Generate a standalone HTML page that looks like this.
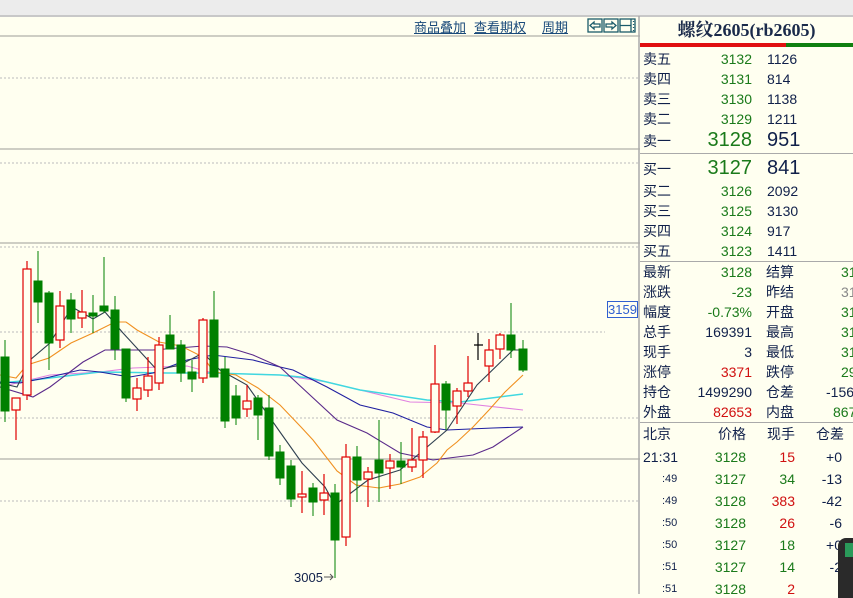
<!DOCTYPE html>
<html><head><meta charset="utf-8"><style>
body{margin:0;width:853px;height:594px;overflow:hidden;background:#fffff0;font-family:"Liberation Sans","Noto Sans CJK SC",sans-serif;position:relative}
.a{position:absolute;white-space:nowrap;font-size:14px;line-height:16px;color:#10204a}
.g{color:#1a7a1a}.r{color:#d01010}
.rt{text-align:right}
.lk{position:absolute;top:19px;font-size:13px;color:#1a4a7a;text-decoration:underline;font-family:"Noto Sans CJK SC",sans-serif;line-height:15px}
</style></head><body>
<div style="position:absolute;left:0;top:0;width:853px;height:15px;background:#ececec;border-bottom:2px solid #c8c8c8"></div>
<span class="lk" style="left:414px">商品叠加</span>
<span class="lk" style="left:474px">查看期权</span>
<span class="lk" style="left:542px">周期</span>
<svg style="position:absolute;left:586px;top:18px" width="52" height="16">
<g fill="none" stroke="#1a5a6a" stroke-width="1.3">
<rect x="2" y="1" width="14" height="13"/><rect x="18" y="1" width="14" height="13"/><rect x="34" y="1" width="15" height="13"/>
<path d="M4 7.5 L8 4 V6 H14 V9 H8 V11 Z"/><path d="M30 7.5 L26 4 V6 H20 V9 H26 V11 Z"/>
<path d="M34 7.5 H45 M45 1 V14"/><path d="M47.5 3V4M47.5 6V7M47.5 9V10M47.5 12V13"/></g></svg>
<svg style="position:absolute;left:0;top:0" width="640" height="594">
<g stroke="#bdbdb5" stroke-width="1.5"><line x1="0" y1="36" x2="640" y2="36"/><line x1="0" y1="149" x2="640" y2="149"/><line x1="0" y1="243" x2="640" y2="243"/><line x1="0" y1="459" x2="640" y2="459"/></g>
<g stroke="#bbb" stroke-width="1" stroke-dasharray="2,2"><line x1="0" y1="78" x2="640" y2="78"/><line x1="0" y1="163" x2="640" y2="163"/><line x1="0" y1="247" x2="640" y2="247"/><line x1="0" y1="332" x2="605" y2="332"/><line x1="0" y1="418" x2="640" y2="418"/><line x1="0" y1="501" x2="640" y2="501"/></g>
<line x1="639" y1="16" x2="639" y2="594" stroke="#aaa" stroke-width="1.5"/>
<g fill="none" stroke-width="1.1">
<polyline stroke="#e080e0" points="0,387 50,375 100,372 133,368 187,366 213,373 280,375 327,382 360,390 410,402 460,403 523,410"/>
<polyline stroke="#40d8e0" stroke-width="1.5" points="0,383 33,380 100,372 167,373 213,373 280,375 310,378 360,390 427,400 460,402 523,394"/>
<polyline stroke="#2020a0" points="0,382 20,383 50,377 80,370 100,372 130,377 153,373 187,360 213,355 253,360 280,367 293,370 327,387 360,405 393,413 427,427 447,430 493,428 523,427"/>
<polyline stroke="#5a2a8a" points="0,387 33,397 50,387 83,362 105,350 153,350 203,346 227,347 253,355 280,367 297,383 337,420 367,433 400,453 433,460 473,455 493,447 523,427"/>
<polyline stroke="#f09020" points="0,375 16,378 27,365 49,358 71,343 93,333 115,322 126,322 137,330 159,342 181,346 203,357 214,372 236,375 258,388 280,405 301,427 313,440 337,471 356,485 379,488 400,484 420,477 437,463 447,450 457,442 473,427 489,410 505,392 523,375"/>
<polyline stroke="#2f4050" points="0,383 17,387 30,360 50,343 72,307 93,319 105,312 123,333 157,370 180,365 203,353 220,370 247,385 280,432 302,463 325,487 335,505 368,480 400,470 447,430 477,385 513,350 523,350"/>
</g>
<g id="c">
<!-- green -->
<g stroke="#008000" fill="#008000">
<line x1="5" y1="340" x2="5" y2="422"/><rect x="1" y="357" width="8" height="54"/>
<line x1="38" y1="251" x2="38" y2="323"/><rect x="34" y="281" width="8" height="21"/>
<line x1="49" y1="291" x2="49" y2="370"/><rect x="45" y="293" width="8" height="50"/>
<line x1="71" y1="293" x2="71" y2="333"/><rect x="67" y="300" width="8" height="19"/>
<line x1="93" y1="295" x2="93" y2="333"/><rect x="89" y="313" width="8" height="3"/>
<line x1="104" y1="257" x2="104" y2="313"/><rect x="100" y="306" width="8" height="5"/>
<line x1="115" y1="296" x2="115" y2="360"/><rect x="111" y="310" width="8" height="39"/>
<line x1="126" y1="349" x2="126" y2="402"/><rect x="122" y="349" width="8" height="49"/>
<line x1="170" y1="315" x2="170" y2="349"/><rect x="166" y="335" width="8" height="14"/>
<line x1="181" y1="340" x2="181" y2="382"/><rect x="177" y="345" width="8" height="28"/>
<line x1="192" y1="360" x2="192" y2="392"/><rect x="188" y="372" width="8" height="7"/>
<line x1="214" y1="291" x2="214" y2="377"/><rect x="210" y="320" width="8" height="57"/>
<line x1="225" y1="357" x2="225" y2="428"/><rect x="221" y="369" width="8" height="52"/>
<line x1="236" y1="385" x2="236" y2="425"/><rect x="232" y="396" width="8" height="22"/>
<line x1="258" y1="395" x2="258" y2="440"/><rect x="254" y="398" width="8" height="17"/>
<line x1="269" y1="395" x2="269" y2="460"/><rect x="265" y="408" width="8" height="48"/>
<line x1="280" y1="445" x2="280" y2="485"/><rect x="276" y="452" width="8" height="26"/>
<line x1="291" y1="460" x2="291" y2="507"/><rect x="287" y="466" width="8" height="33"/>
<line x1="313" y1="483" x2="313" y2="516"/><rect x="309" y="488" width="8" height="14"/>
<line x1="335" y1="484" x2="335" y2="578"/><rect x="331" y="493" width="8" height="47"/>
<line x1="357" y1="446" x2="357" y2="502"/><rect x="353" y="457" width="8" height="23"/>
<line x1="379" y1="420" x2="379" y2="502"/><rect x="375" y="460" width="8" height="13"/>
<line x1="401" y1="442" x2="401" y2="484"/><rect x="397" y="461" width="8" height="6"/>
<line x1="446" y1="381" x2="446" y2="430"/><rect x="442" y="384" width="8" height="26"/>
<line x1="511" y1="303" x2="511" y2="358"/><rect x="507" y="335" width="8" height="15"/>
<line x1="523" y1="340" x2="523" y2="372"/><rect x="519" y="349" width="8" height="21"/>
</g>
<g stroke="#e00000" fill="#fffff0" stroke-width="1.2">
<line x1="16" y1="398" x2="16" y2="440"/><rect x="12" y="398" width="8" height="12"/>
<line x1="27" y1="261" x2="27" y2="400"/><rect x="23" y="269" width="8" height="126"/>
<line x1="60" y1="291" x2="60" y2="348"/><rect x="56" y="306" width="8" height="34"/>
<line x1="82" y1="290" x2="82" y2="328"/><rect x="78" y="312" width="8" height="6"/>
<line x1="137" y1="378" x2="137" y2="411"/><rect x="133" y="388" width="8" height="11"/>
<line x1="148" y1="357" x2="148" y2="397"/><rect x="144" y="376" width="8" height="14"/>
<line x1="159" y1="337" x2="159" y2="390"/><rect x="155" y="345" width="8" height="38"/>
<line x1="203" y1="318" x2="203" y2="383"/><rect x="199" y="320" width="8" height="58"/>
<line x1="247" y1="385" x2="247" y2="417"/><rect x="243" y="401" width="8" height="8"/>
<line x1="302" y1="471" x2="302" y2="513"/><rect x="298" y="494" width="8" height="3"/>
<line x1="324" y1="474" x2="324" y2="515"/><rect x="320" y="493" width="8" height="7"/>
<line x1="346" y1="444" x2="346" y2="546"/><rect x="342" y="457" width="8" height="80"/>
<line x1="368" y1="467" x2="368" y2="507"/><rect x="364" y="472" width="8" height="7"/>
<line x1="390" y1="454" x2="390" y2="489"/><rect x="386" y="461" width="8" height="7"/>
<line x1="412" y1="428" x2="412" y2="472"/><rect x="408" y="460" width="8" height="7"/>
<line x1="423" y1="431" x2="423" y2="478"/><rect x="419" y="437" width="8" height="23"/>
<line x1="435" y1="345" x2="435" y2="433"/><rect x="431" y="384" width="8" height="48"/>
<line x1="457" y1="388" x2="457" y2="424"/><rect x="453" y="391" width="8" height="15"/>
<line x1="468" y1="356" x2="468" y2="397"/><rect x="464" y="383" width="8" height="8"/>
<line x1="489" y1="339" x2="489" y2="382"/><rect x="485" y="350" width="8" height="16"/>
<line x1="500" y1="333" x2="500" y2="359"/><rect x="496" y="335" width="8" height="14"/>
</g>
<path d="M478 333V360M474 345H483" stroke="#000" stroke-width="1.2"/>
</g>
<path d="M324 577H333M330 574L333 577L330 580" stroke="#555" fill="none"/>
<text x="294" y="582" font-size="13" fill="#10204a" font-family="Liberation Sans">3005</text>
</svg>
<div class="a" style="left:607px;top:301px;width:29px;height:15px;border:1px solid #3060d0;color:#3060d0;font-size:13px;text-align:center;background:#fffff0">3159</div>
<!-- right panel -->
<div class="a" style="left:640px;top:20px;width:213px;text-align:center;font-size:18px;line-height:20px;font-weight:bold;font-family:'Liberation Serif','Noto Serif CJK SC',serif;color:#1a2a4a">螺纹2605(rb2605)</div>
<div style="position:absolute;left:640px;top:43px;width:146px;height:4px;background:#e01010"></div>
<div style="position:absolute;left:786px;top:43px;width:67px;height:4px;background:#108010"></div>
<div style="position:absolute;left:640px;top:153px;width:213px;height:1px;background:#aaa"></div>
<div style="position:absolute;left:640px;top:261px;width:213px;height:1px;background:#aaa"></div>
<div style="position:absolute;left:640px;top:422px;width:213px;height:1px;background:#aaa"></div>

<div class="a" style="left:643px;top:51px">卖五</div><div class="a g rt" style="left:700px;top:51px;width:52px">3132</div><div class="a" style="left:767px;top:51px">1126</div>
<div class="a" style="left:643px;top:71px">卖四</div><div class="a g rt" style="left:700px;top:71px;width:52px">3131</div><div class="a" style="left:767px;top:71px">814</div>
<div class="a" style="left:643px;top:91px">卖三</div><div class="a g rt" style="left:700px;top:91px;width:52px">3130</div><div class="a" style="left:767px;top:91px">1138</div>
<div class="a" style="left:643px;top:111px">卖二</div><div class="a g rt" style="left:700px;top:111px;width:52px">3129</div><div class="a" style="left:767px;top:111px">1211</div>
<div class="a" style="left:643px;top:133px">卖一</div><div class="a g rt" style="left:690px;top:129px;width:62px;font-size:20px;line-height:22px">3128</div><div class="a" style="left:767px;top:129px;font-size:20px;line-height:22px">951</div>
<div class="a" style="left:643px;top:161px">买一</div><div class="a g rt" style="left:690px;top:157px;width:62px;font-size:20px;line-height:22px">3127</div><div class="a" style="left:767px;top:157px;font-size:20px;line-height:22px">841</div>
<div class="a" style="left:643px;top:183px">买二</div><div class="a g rt" style="left:700px;top:183px;width:52px">3126</div><div class="a" style="left:767px;top:183px">2092</div>
<div class="a" style="left:643px;top:203px">买三</div><div class="a g rt" style="left:700px;top:203px;width:52px">3125</div><div class="a" style="left:767px;top:203px">3130</div>
<div class="a" style="left:643px;top:223px">买四</div><div class="a g rt" style="left:700px;top:223px;width:52px">3124</div><div class="a" style="left:767px;top:223px">917</div>
<div class="a" style="left:643px;top:243px">买五</div><div class="a g rt" style="left:700px;top:243px;width:52px">3123</div><div class="a" style="left:767px;top:243px">1411</div>

<div class="a" style="left:643px;top:264px">最新</div><div class="a g rt" style="left:680px;top:264px;width:72px">3128</div><div class="a" style="left:766px;top:264px">结算</div><div class="a g" style="left:841px;top:264px">31</div>
<div class="a" style="left:643px;top:284px">涨跌</div><div class="a g rt" style="left:680px;top:284px;width:72px">-23</div><div class="a" style="left:766px;top:284px">昨结</div><div class="a" style="left:841px;top:284px;color:#888">31</div>
<div class="a" style="left:643px;top:304px">幅度</div><div class="a g rt" style="left:680px;top:304px;width:72px">-0.73%</div><div class="a" style="left:766px;top:304px">开盘</div><div class="a g" style="left:841px;top:304px">31</div>
<div class="a" style="left:643px;top:324px">总手</div><div class="a rt" style="left:680px;top:324px;width:72px">169391</div><div class="a" style="left:766px;top:324px">最高</div><div class="a g" style="left:841px;top:324px">31</div>
<div class="a" style="left:643px;top:344px">现手</div><div class="a rt" style="left:680px;top:344px;width:72px">3</div><div class="a" style="left:766px;top:344px">最低</div><div class="a g" style="left:841px;top:344px">31</div>
<div class="a" style="left:643px;top:364px">涨停</div><div class="a r rt" style="left:680px;top:364px;width:72px">3371</div><div class="a" style="left:766px;top:364px">跌停</div><div class="a g" style="left:841px;top:364px">29</div>
<div class="a" style="left:643px;top:384px">持仓</div><div class="a rt" style="left:670px;top:384px;width:82px">1499290</div><div class="a" style="left:766px;top:384px">仓差</div><div class="a" style="left:826px;top:384px">-156</div>
<div class="a" style="left:643px;top:404px">外盘</div><div class="a r rt" style="left:680px;top:404px;width:72px">82653</div><div class="a" style="left:766px;top:404px">内盘</div><div class="a g" style="left:833px;top:404px">867</div>

<div class="a" style="left:643px;top:426px">北京</div><div class="a rt" style="left:690px;top:426px;width:56px">价格</div><div class="a rt" style="left:750px;top:426px;width:45px">现手</div><div class="a rt" style="left:800px;top:426px;width:44px">仓差</div>
<div class="a" style="left:643px;top:449px">21:31</div><div class="a g rt" style="left:700px;top:449px;width:46px">3128</div><div class="a r rt" style="left:750px;top:449px;width:45px">15</div><div class="a rt" style="left:800px;top:449px;width:42px">+0</div>
<div class="a" style="left:662px;top:471px;font-size:11px">:49</div><div class="a g rt" style="left:700px;top:471px;width:46px">3127</div><div class="a g rt" style="left:750px;top:471px;width:45px">34</div><div class="a rt" style="left:800px;top:471px;width:42px">-13</div>
<div class="a" style="left:662px;top:493px;font-size:11px">:49</div><div class="a g rt" style="left:700px;top:493px;width:46px">3128</div><div class="a r rt" style="left:750px;top:493px;width:45px">383</div><div class="a rt" style="left:800px;top:493px;width:42px">-42</div>
<div class="a" style="left:662px;top:515px;font-size:11px">:50</div><div class="a g rt" style="left:700px;top:515px;width:46px">3128</div><div class="a r rt" style="left:750px;top:515px;width:45px">26</div><div class="a rt" style="left:800px;top:515px;width:42px">-6</div>
<div class="a" style="left:662px;top:537px;font-size:11px">:50</div><div class="a g rt" style="left:700px;top:537px;width:46px">3127</div><div class="a g rt" style="left:750px;top:537px;width:45px">18</div><div class="a rt" style="left:800px;top:537px;width:42px">+0</div>
<div class="a" style="left:662px;top:559px;font-size:11px">:51</div><div class="a g rt" style="left:700px;top:559px;width:46px">3127</div><div class="a g rt" style="left:750px;top:559px;width:45px">14</div><div class="a rt" style="left:800px;top:559px;width:42px">-2</div>
<div class="a" style="left:662px;top:581px;font-size:11px">:51</div><div class="a g rt" style="left:700px;top:581px;width:46px">3128</div><div class="a r rt" style="left:750px;top:581px;width:45px">2</div><div class="a rt" style="left:800px;top:581px;width:42px">-</div>
<div style="position:absolute;left:838px;top:538px;width:20px;height:60px;background:#2a2a2a;border-radius:8px 0 0 0"></div>
<div style="position:absolute;left:845px;top:543px;width:8px;height:14px;background:#2a9a5a"></div>
</body></html>
